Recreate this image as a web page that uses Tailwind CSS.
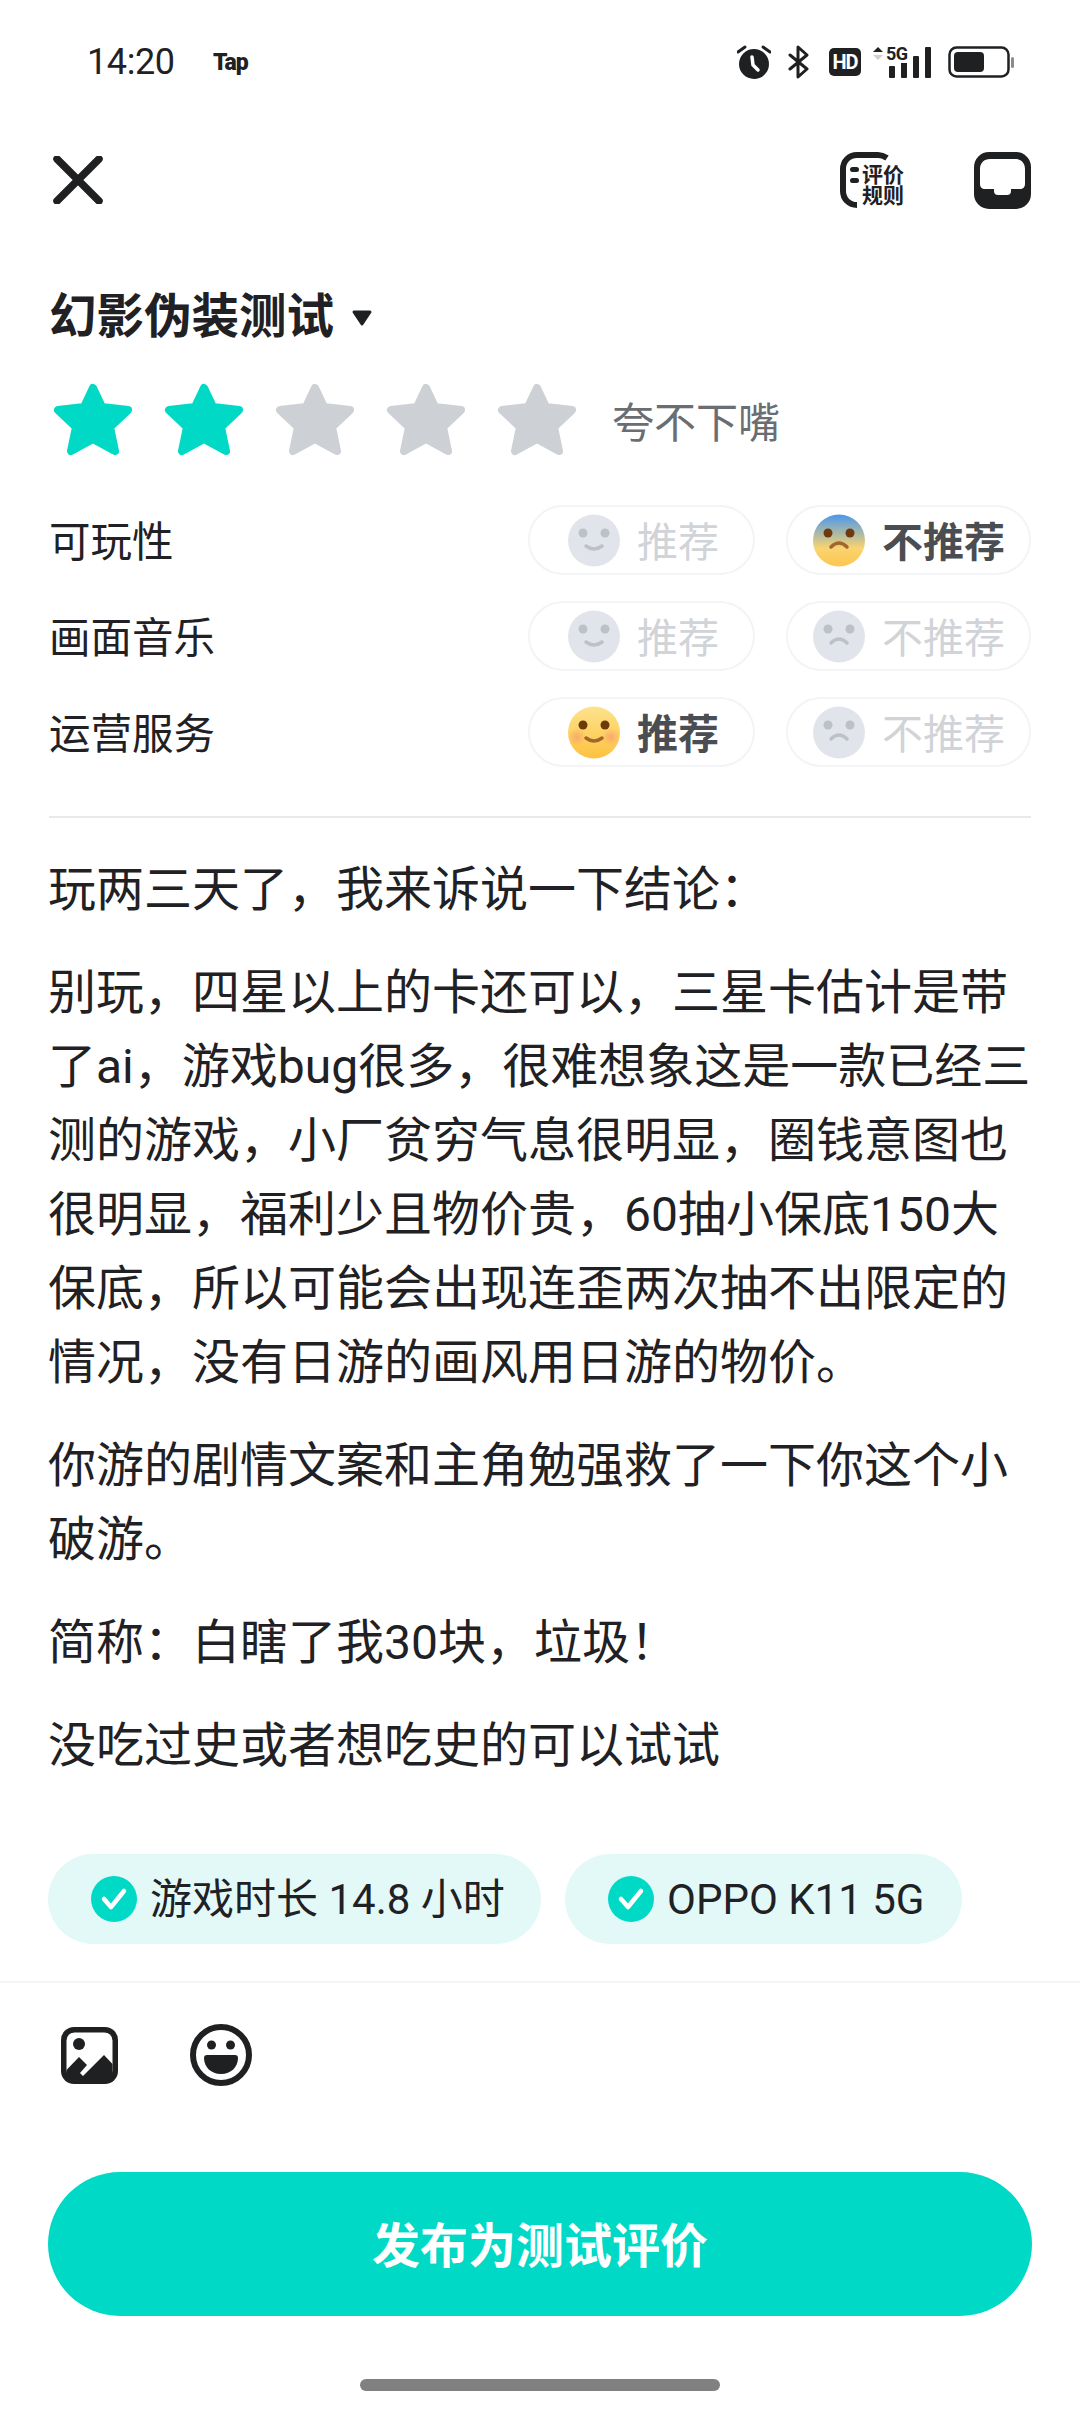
<!DOCTYPE html>
<html lang="zh-CN">
<head>
  <meta charset="UTF-8">
  <meta name="viewport" content="width=device-width, initial-scale=1.0">
  <title>发布评价</title>
  <script src="https://cdn.jsdelivr.net/npm/@tailwindcss/browser@4"></script>
</head>
<body class="bg-white">
  <div class="w-[1080px] h-[2412px] overflow-hidden flex flex-col text-[#1f2124] font-['Roboto','Noto_Sans_CJK_SC',sans-serif]">

    <!-- Status bar -->
    <div class="h-[124px] shrink-0 flex items-center pl-[87px] pr-[66px]">
      <span class="text-[36px] leading-none w-[126px] tracking-[-0.4px]">14:20</span>
      <span class="text-[23px] font-black leading-none tracking-[-1px]">Tap</span>
      <div class="ml-auto flex items-center">
        <!-- alarm -->
        <svg width="34" height="36" viewBox="0 0 34 36" class="mr-[17px]"><circle cx="17" cy="20" r="15" fill="#1f2022"/><path d="M1 8 L8 3 M33 8 L26 3" stroke="#1f2022" stroke-width="3" stroke-linecap="round"/><path d="M15 13 L16 21 L21 26" stroke="#fff" stroke-width="3.5" fill="none" stroke-linecap="round"/></svg>
        <!-- bluetooth -->
        <svg width="22" height="34" viewBox="0 0 22 34" class="mr-[19px]"><path d="M2 10 L19 24 L10 32 L10 2 L19 10 L2 24" stroke="#1f2022" stroke-width="3" fill="none" stroke-linejoin="round" stroke-linecap="round"/></svg>
        <!-- HD -->
        <span class="w-[32px] h-[28px] mr-[11px] rounded-[5px] bg-[#1f2022] text-white text-[20px] font-bold leading-[28px] text-center tracking-[-1px]">HD</span>
        <!-- signal -->
        <div class="relative w-[60px] h-[32px] mr-[16px]">
          <svg width="60" height="32" viewBox="0 0 60 32" class="absolute left-0 top-0"><path d="M1 6 L6 1 L11 6 Z" fill="#1f2022"/><path d="M1 9 L11 9 L6 14 Z" fill="#cfd0d2"/><rect x="17" y="20" width="6" height="12" rx="1" fill="#1f2022"/><rect x="29" y="16" width="6" height="16" rx="1" fill="#1f2022"/><rect x="41" y="10" width="6" height="22" rx="1" fill="#1f2022"/><rect x="53" y="1" width="6" height="31" rx="1" fill="#1f2022"/></svg>
          <span class="absolute left-[14px] top-[-1px] text-[18px] font-bold leading-[18px] tracking-[-0.5px] bg-white">5G</span>
        </div>
        <!-- battery -->
        <svg width="66" height="32" viewBox="0 0 66 32"><rect x="1.5" y="1.5" width="59" height="29" rx="7" fill="none" stroke="#1f2022" stroke-width="2.5"/><rect x="6" y="6" width="30" height="20" rx="4" fill="#1f2022"/><rect x="63" y="11" width="3" height="11" rx="1.5" fill="#8a8b8d"/></svg>
      </div>
    </div>

    <!-- Header -->
    <div class="h-[112px] shrink-0 flex items-center pl-[53px] pr-[49px]">
      <svg width="50" height="48" viewBox="0 0 50 48"><path d="M4 3 L46 45 M46 3 L4 45" stroke="#1f2022" stroke-width="7.500" stroke-linecap="round"/></svg>
      <div class="ml-auto relative w-[66px] h-[56px] mr-[68px]">
        <svg width="66" height="56" viewBox="0 0 66 56" class="absolute left-0 top-0"><path d="M47 6 C44 4 42 3 38 3 L17 3 C9 3 3 9 3 17 L3 39 C3 47 9 53 17 53" fill="none" stroke="#1f2022" stroke-width="6"/><rect x="10" y="15" width="9" height="5" rx="2.5" fill="#1f2022"/><rect x="10" y="26" width="9" height="5" rx="2.5" fill="#1f2022"/></svg>
        <div class="absolute left-[22px] top-[13px] text-[21px] font-bold leading-[21px] whitespace-nowrap">评价<br>规则</div>
      </div>
      <svg width="57" height="57" viewBox="0 0 57 57"><rect width="57" height="57" rx="15" fill="#1f2022"/><path d="M16 7 L41 7 C47 7 51 11 51 17 L51 32 C51 35 49 37 46 37 L37 37 L37 39 C37 42 35 43 33 43 L24 43 C22 43 20 42 20 39 L20 37 L11 37 C8 37 6 35 6 32 L6 17 C6 11 10 7 16 7 Z" fill="#fff"/></svg>
    </div>

    <!-- Title -->
    <div class="mt-[52px] h-[60px] shrink-0 pl-[49px] flex items-center">
      <span class="text-[47.500px] font-bold leading-none">幻影伪装测试</span>
      <svg width="22" height="17" viewBox="0 0 22 17" class="ml-[17px]"><path d="M3 2 L19 2 L11 14 Z" fill="#1f2022" stroke="#1f2022" stroke-width="3" stroke-linejoin="round"/></svg>
    </div>

    <!-- Stars -->
    <div class="mt-[35px] h-[73px] shrink-0 pl-[53px] flex items-center gap-[31px]">
      <svg width="80" height="73" viewBox="0 0 80 73"><polygon points="40,5 49,24 75,27 57,44 62,68 40,56 18,68 23,44 5,27 31,24" fill="#00d9c5" stroke="#00d9c5" stroke-width="8" stroke-linejoin="round"/></svg>
      <svg width="80" height="73" viewBox="0 0 80 73"><polygon points="40,5 49,24 75,27 57,44 62,68 40,56 18,68 23,44 5,27 31,24" fill="#00d9c5" stroke="#00d9c5" stroke-width="8" stroke-linejoin="round"/></svg>
      <svg width="80" height="73" viewBox="0 0 80 73"><polygon points="40,5 49,24 75,27 57,44 62,68 40,56 18,68 23,44 5,27 31,24" fill="#cdd0d5" stroke="#cdd0d5" stroke-width="8" stroke-linejoin="round"/></svg>
      <svg width="80" height="73" viewBox="0 0 80 73"><polygon points="40,5 49,24 75,27 57,44 62,68 40,56 18,68 23,44 5,27 31,24" fill="#cdd0d5" stroke="#cdd0d5" stroke-width="8" stroke-linejoin="round"/></svg>
      <svg width="80" height="73" viewBox="0 0 80 73"><polygon points="40,5 49,24 75,27 57,44 62,68 40,56 18,68 23,44 5,27 31,24" fill="#cdd0d5" stroke="#cdd0d5" stroke-width="8" stroke-linejoin="round"/></svg>
      <span class="ml-[4px] pt-[8px] text-[42px] leading-none text-[#6a6d71]">夸不下嘴</span>
    </div>

    <!-- Rating rows -->
    <div class="mt-[49px] shrink-0 pl-[49px] pr-[49px] flex flex-col gap-[26px]">
      <div class="h-[70px] flex items-center">
        <span class="pt-[6px] text-[41.500px] leading-none flex-1">可玩性</span>
        <div class="w-[227px] h-[70px] rounded-full border-2 border-[#f3f4f5] flex items-center pl-[38px] gap-[17px]">
          <svg width="52" height="53" viewBox="0 0 52 53"><circle cx="26" cy="26.500" r="26" fill="#e1e4ea"/><circle cx="15" cy="19" r="4.500" fill="#bcc0c8"/><circle cx="37" cy="19" r="4.500" fill="#bcc0c8"/><path d="M18 32 Q26 38 34 32" fill="none" stroke="#bcc0c8" stroke-width="3.500" stroke-linecap="round"/></svg>
          <span class="pt-[6px] text-[41px] leading-none text-[#d0d3d7]">推荐</span>
        </div>
        <div class="ml-[31px] w-[245px] h-[70px] rounded-full border-2 border-[#f3f4f5] flex items-center pl-[25px] gap-[17px]">
          <svg width="52" height="53" viewBox="0 0 52 53"><defs><linearGradient id="fear" x1="0" y1="0" x2="0" y2="1"><stop offset="0" stop-color="#4a97ec"/><stop offset="0.65" stop-color="#f9d46f"/><stop offset="1" stop-color="#fdc64f"/></linearGradient></defs><circle cx="26" cy="26.500" r="26" fill="url(#fear)"/><circle cx="15" cy="19" r="4.500" fill="#6e3a0c"/><circle cx="37" cy="19" r="4.500" fill="#6e3a0c"/><path d="M18 33 Q26 25 34 33" fill="none" stroke="#a2662d" stroke-width="3.500" stroke-linecap="round"/></svg>
          <span class="pt-[6px] text-[41px] leading-none font-bold text-[#4a4e53]">不推荐</span>
        </div>
      </div>
      <div class="h-[70px] flex items-center">
        <span class="pt-[6px] text-[41.500px] leading-none flex-1">画面音乐</span>
        <div class="w-[227px] h-[70px] rounded-full border-2 border-[#f3f4f5] flex items-center pl-[38px] gap-[17px]">
          <svg width="52" height="53" viewBox="0 0 52 53"><circle cx="26" cy="26.500" r="26" fill="#e1e4ea"/><circle cx="15" cy="19" r="4.500" fill="#bcc0c8"/><circle cx="37" cy="19" r="4.500" fill="#bcc0c8"/><path d="M18 32 Q26 38 34 32" fill="none" stroke="#bcc0c8" stroke-width="3.500" stroke-linecap="round"/></svg>
          <span class="pt-[6px] text-[41px] leading-none text-[#d0d3d7]">推荐</span>
        </div>
        <div class="ml-[31px] w-[245px] h-[70px] rounded-full border-2 border-[#f3f4f5] flex items-center pl-[25px] gap-[17px]">
          <svg width="52" height="53" viewBox="0 0 52 53"><circle cx="26" cy="26.500" r="26" fill="#e1e4ea"/><circle cx="15" cy="19" r="4.500" fill="#bcc0c8"/><circle cx="37" cy="19" r="4.500" fill="#bcc0c8"/><path d="M18 33 Q26 25 34 33" fill="none" stroke="#bcc0c8" stroke-width="3.500" stroke-linecap="round"/></svg>
          <span class="pt-[6px] text-[41px] leading-none text-[#d0d3d7]">不推荐</span>
        </div>
      </div>
      <div class="h-[70px] flex items-center">
        <span class="pt-[6px] text-[41.500px] leading-none flex-1">运营服务</span>
        <div class="w-[227px] h-[70px] rounded-full border-2 border-[#f3f4f5] flex items-center pl-[38px] gap-[17px]">
          <svg width="52" height="53" viewBox="0 0 52 53"><defs><linearGradient id="happy" x1="0" y1="0" x2="0" y2="1"><stop offset="0" stop-color="#fde38c"/><stop offset="1" stop-color="#fdc23f"/></linearGradient><radialGradient id="blush"><stop offset="0" stop-color="#f8a070" stop-opacity="0.8"/><stop offset="1" stop-color="#f8a070" stop-opacity="0"/></radialGradient></defs><circle cx="26" cy="26.500" r="26" fill="url(#happy)"/><circle cx="9" cy="31" r="9" fill="url(#blush)"/><circle cx="43" cy="31" r="9" fill="url(#blush)"/><circle cx="15" cy="19" r="4.500" fill="#6e3a0c"/><circle cx="37" cy="19" r="4.500" fill="#6e3a0c"/><path d="M18 32 Q26 38 34 32" fill="none" stroke="#a2662d" stroke-width="3.500" stroke-linecap="round"/></svg>
          <span class="pt-[6px] text-[41px] leading-none font-bold text-[#4a4e53]">推荐</span>
        </div>
        <div class="ml-[31px] w-[245px] h-[70px] rounded-full border-2 border-[#f3f4f5] flex items-center pl-[25px] gap-[17px]">
          <svg width="52" height="53" viewBox="0 0 52 53"><circle cx="26" cy="26.500" r="26" fill="#e1e4ea"/><circle cx="15" cy="19" r="4.500" fill="#bcc0c8"/><circle cx="37" cy="19" r="4.500" fill="#bcc0c8"/><path d="M18 33 Q26 25 34 33" fill="none" stroke="#bcc0c8" stroke-width="3.500" stroke-linecap="round"/></svg>
          <span class="pt-[6px] text-[41px] leading-none text-[#d0d3d7]">不推荐</span>
        </div>
      </div>
    </div>

    <div class="mt-[49px] mx-[49px] h-[2px] shrink-0 bg-[#e9e9e9]"></div>

    <!-- Review text -->
    <div class="mt-[35px] pl-[48px] h-[928px] shrink-0 text-[48px] leading-[74px] whitespace-nowrap flex flex-col gap-[29px]">
      <p>玩两三天了，我来诉说一下结论：</p>
      <p>别玩，四星以上的卡还可以，三星卡估计是带<br>了ai，游戏bug很多，很难想象这是一款已经三<br>测的游戏，小厂贫穷气息很明显，圈钱意图也<br>很明显，福利少且物价贵，60抽小保底150大<br>保底，所以可能会出现连歪两次抽不出限定的<br>情况，没有日游的画风用日游的物价。</p>
      <p>你游的剧情文案和主角勉强救了一下你这个小<br>破游。</p>
      <p>简称：白瞎了我30块，垃圾！</p>
      <p>没吃过史或者想吃史的可以试试</p>
    </div>

    <!-- Chips -->
    <div class="mt-[73px] pl-[48px] shrink-0 flex gap-[24px]">
      <div class="h-[90px] w-[493px] rounded-full bg-[#e3f9f8] flex items-center pl-[43px] gap-[13px]">
        <svg width="46" height="46" viewBox="0 0 46 46"><circle cx="23" cy="23" r="23" fill="#00d9c5"/><path d="M13 23 L20 31 L33 15" fill="none" stroke="#fff" stroke-width="4.500" stroke-linecap="round" stroke-linejoin="round"/></svg>
        <span class="pt-[2px] text-[42px] leading-none whitespace-nowrap">游戏时长 14.8 小时</span>
      </div>
      <div class="h-[90px] w-[397px] rounded-full bg-[#e3f9f8] flex items-center pl-[43px] gap-[13px]">
        <svg width="46" height="46" viewBox="0 0 46 46"><circle cx="23" cy="23" r="23" fill="#00d9c5"/><path d="M13 23 L20 31 L33 15" fill="none" stroke="#fff" stroke-width="4.500" stroke-linecap="round" stroke-linejoin="round"/></svg>
        <span class="pt-[2px] text-[42px] leading-none whitespace-nowrap">OPPO K11 5G</span>
      </div>
    </div>

    <div class="mt-[37px] h-[2px] shrink-0 bg-[#f4f4f4]"></div>

    <!-- Attachments -->
    <div class="mt-[41px] h-[62px] shrink-0 pl-[61px] flex items-center gap-[72px]">
      <svg width="57" height="57" viewBox="0 0 57 57"><rect width="57" height="57" rx="13" fill="#1f2022"/><rect x="5.500" y="5.500" width="46" height="46" rx="8" fill="#fff"/><circle cx="18" cy="17" r="6" fill="#1f2022"/><path d="M5.500 43 L18 30 L26 38 L19 46 L22 49 L43 28 L51.500 37 L51.500 52 L5.500 52 Z" fill="#1f2022"/></svg>
      <svg width="62" height="62" viewBox="0 0 62 62"><circle cx="31" cy="31" r="28" fill="none" stroke="#1f2022" stroke-width="6"/><circle cx="21.500" cy="21" r="4.500" fill="#1f2022"/><circle cx="40.500" cy="21" r="4.500" fill="#1f2022"/><path d="M17 31 L45 31 C47 31 48 32 48 34 C48 43 41 50 31 50 C21 50 14 43 14 34 C14 32 15 31 17 31 Z" fill="#1f2022"/></svg>
    </div>

    <!-- Publish -->
    <div class="mt-[86px] mx-[48px] h-[144px] shrink-0 rounded-full bg-[#00d9c5] flex items-center justify-center">
      <span class="pt-[6px] text-[48px] font-bold leading-none text-white">发布为测试评价</span>
    </div>

    <!-- Home indicator -->
    <div class="mt-[63px] mx-auto w-[360px] h-[12px] shrink-0 rounded-full bg-[#808080]"></div>
  </div>
</body>
</html>
